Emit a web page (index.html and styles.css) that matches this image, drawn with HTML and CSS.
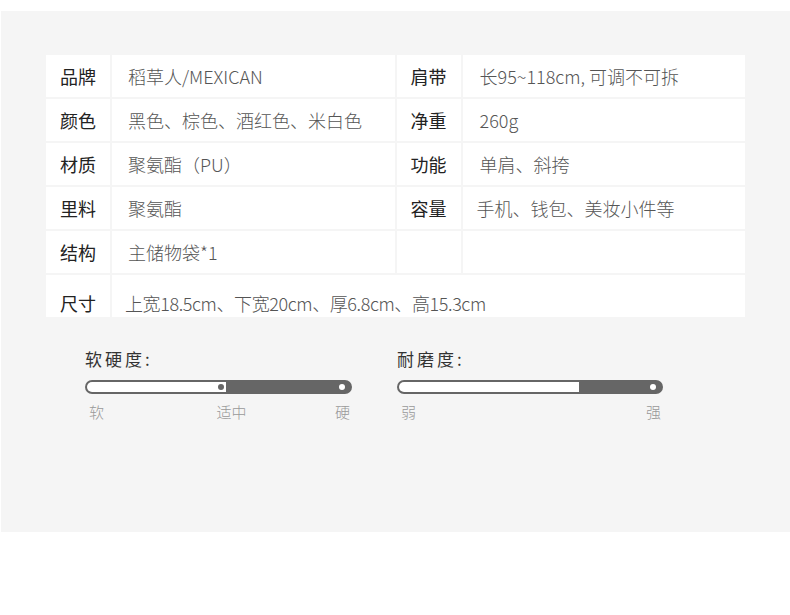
FILE: index.html
```html
<!DOCTYPE html>
<html lang="zh-CN">
<head>
<meta charset="utf-8">
<title>商品参数</title>
<link rel="stylesheet" href="styles.css">
</head>
<body>
<div class="panel">
  <div class="spec">
    <div class="k">品牌</div><div class="v v1">稻草人/MEXICAN</div><div class="k">肩带</div><div class="v v2">长95~118cm, 可调不可拆</div>
    <div class="k">颜色</div><div class="v v1">黑色、棕色、酒红色、米白色</div><div class="k">净重</div><div class="v v2">260g</div>
    <div class="k">材质</div><div class="v v1">聚氨酯（PU）</div><div class="k">功能</div><div class="v v2">单肩、斜挎</div>
    <div class="k">里料</div><div class="v v1">聚氨酯</div><div class="k">容量</div><div class="v v2 v2b">手机、钱包、美妆小件等</div>
    <div class="k">结构</div><div class="v v1">主储物袋*1</div><div class="k"></div><div class="v v2"></div>
    <div class="k last">尺寸</div><div class="v wide last">上宽18.5cm、下宽20cm、厚6.8cm、高15.3cm</div>
  </div>
  <div class="sliders">
    <div class="slider s1">
      <div class="s-title">软硬度:</div>
      <div class="track">
        <div class="fill" style="width:139px"><span class="dot dot-gray"></span></div>
        <div class="rest"><span class="dot dot-white"></span></div>
      </div>
      <div class="scale"><span>软</span><span class="mid">适中</span><span>硬</span></div>
    </div>
    <div class="slider s2">
      <div class="s-title">耐磨度:</div>
      <div class="track">
        <div class="fill" style="width:180px"></div>
        <div class="rest"><span class="dot dot-white"></span></div>
      </div>
      <div class="scale"><span>弱</span><span>强</span></div>
    </div>
  </div>
</div>
</body>
</html>
```

FILE: styles.css
```css
* { box-sizing: border-box; }
html, body { margin: 0; padding: 0; background: #fff; }
body {
  font-family: "Noto Sans CJK SC", "Noto Sans", sans-serif;
  color: #333;
}
.panel {
  margin: 11px 0 0 1px;
  height: 521px;
  background: #f5f5f5;
  padding-top: 44px;
}
.spec {
  margin-left: 45px;
  width: 699px;
  display: grid;
  grid-template-columns: 64px 1fr 64px 1fr;
  grid-auto-rows: 42px;
  gap: 2px;
}
.k, .v {
  background: #fff;
  display: flex;
  align-items: center;
  font-size: 18px;
  line-height: 24px;
}
.k {
  justify-content: center;
  font-weight: 400;
  color: #222;
}
.v {
  font-weight: 300;
  color: #555;
}
.v1 { padding-left: 16px; }
.v2 { padding-left: 17px; }
.v2b { padding-left: 14px; }
.wide { grid-column: 2 / 5; padding-left: 13px; letter-spacing: -0.4px; }
.last { padding-top: 14px; }

.sliders {
  display: flex;
  gap: 45px;
  margin-top: 30px;
  padding-left: 84px;
}
.slider.s1 { width: 267px; }
.slider.s2 { width: 266px; }
.s-title {
  font-size: 17px;
  line-height: 24px;
  letter-spacing: 3px;
  color: #333;
}
.track {
  margin-top: 9px;
  height: 14px;
  border-radius: 7px;
  background: #666;
  padding: 2px;
  display: flex;
  align-items: stretch;
}
.fill {
  background: #fff;
  border-radius: 5px 0 0 5px;
  display: flex;
  align-items: center;
  justify-content: flex-end;
  padding-right: 2px;
}
.rest {
  flex: 1;
  display: flex;
  align-items: center;
  justify-content: flex-end;
  padding-right: 5px;
}
.dot {
  width: 6px;
  height: 6px;
  border-radius: 50%;
}
.dot-gray { background: #666; }
.dot-white { background: #fff; }
.scale {
  margin-top: 8px;
  display: flex;
  justify-content: space-between;
  padding: 0 2px 0 4px;
  font-size: 15px;
  line-height: 20px;
  color: #999;
  font-weight: 300;
}
.scale .mid { margin-left: 24px; }
```
